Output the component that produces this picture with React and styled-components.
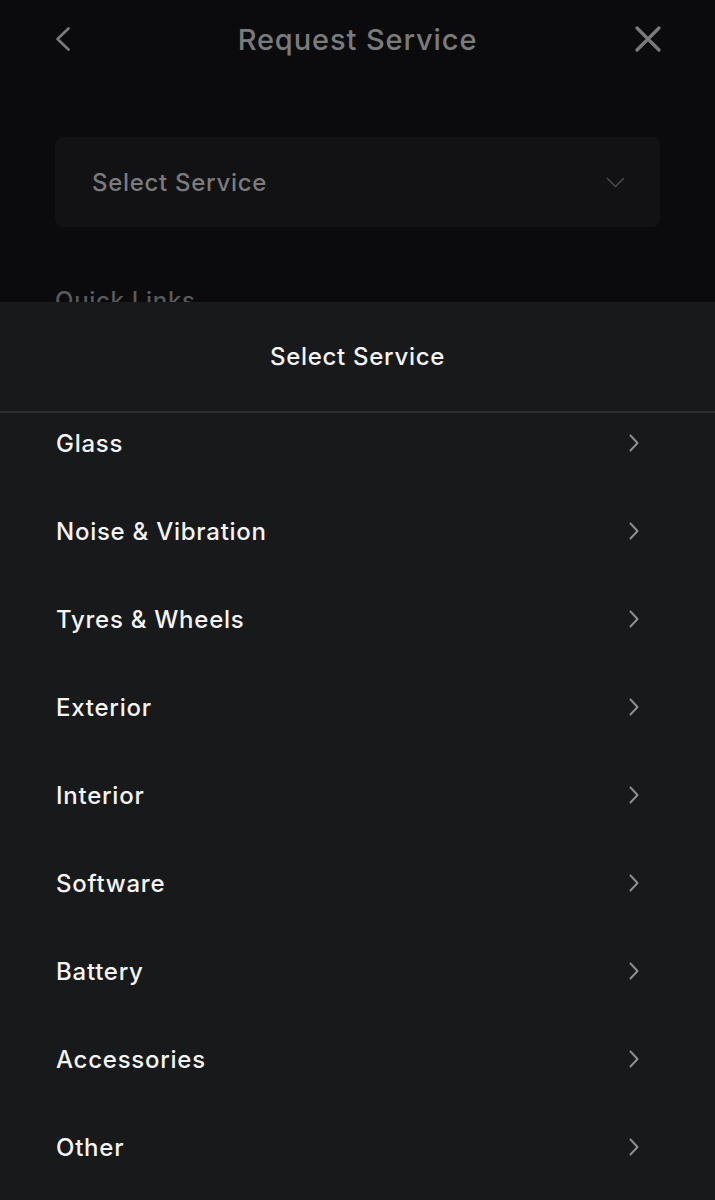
import React from "react";
import styled, { createGlobalStyle } from "styled-components";

const Global = createGlobalStyle`
  html, body {
    margin: 0;
    padding: 0;
    background: #0b0b0d;
  }
  * {
    box-sizing: border-box;
  }
`;

const Screen = styled.div`
  position: relative;
  width: 715px;
  height: 1200px;
  overflow: hidden;
  background: #0b0b0d;
  font-family: Inter, "Liberation Sans", sans-serif;
`;

const Header = styled.div`
  display: flex;
  align-items: center;
  justify-content: space-between;
  height: 78px;
  padding: 0 52px 0 48px;
`;

const IconButton = styled.div`
  width: 30px;
  height: 30px;
  display: flex;
  align-items: center;
  justify-content: center;
`;

const Title = styled.div`
  font-size: 29px;
  font-weight: 500;
  color: #7b7b7d;
  letter-spacing: 0.9px;
  margin-left: 4px;
`;

const Body = styled.div`
  padding: 59px 55px 0 55px;
`;

const SelectBox = styled.div`
  height: 90px;
  border-radius: 8px;
  background: #121214;
  display: flex;
  align-items: center;
  justify-content: space-between;
  padding: 0 35px 0 37px;
`;

const SelectLabel = styled.div`
  font-size: 24px;
  font-weight: 500;
  color: #7b7b7d;
  letter-spacing: 0.7px;
`;

const SectionTitle = styled.div`
  margin-top: 59px;
  font-size: 24px;
  font-weight: 500;
  color: #5a5a5d;
  letter-spacing: 0.7px;
`;

const Sheet = styled.div`
  position: absolute;
  left: 0;
  right: 0;
  top: 302px;
  bottom: 0;
  background: #18191b;
`;

const SheetHeader = styled.div`
  height: 111px;
  display: flex;
  align-items: center;
  justify-content: center;
  border-bottom: 2px solid #2e2f31;
  font-size: 24px;
  font-weight: 500;
  color: #f4f4f5;
  letter-spacing: 0.7px;
`;

const List = styled.div`
  display: flex;
  flex-direction: column;
  margin-top: -14px;
`;

const Item = styled.div`
  height: 88px;
  display: flex;
  align-items: center;
  justify-content: space-between;
  padding: 0 76px 0 56px;
`;

const ItemLabel = styled.div`
  font-size: 24px;
  font-weight: 500;
  color: #f4f4f5;
  letter-spacing: 0.75px;
`;

const Chevron = ({ dir = "right", color = "#8e8e90", w = 10, h = 18, stroke = 2 }) => {
  const paths = {
    right: `M1.5 1.5 L${w - 1.5} ${h / 2} L1.5 ${h - 1.5}`,
    left: `M${w - 1.5} 1.5 L1.5 ${h / 2} L${w - 1.5} ${h - 1.5}`,
    down: `M1.5 1.5 L${w / 2} ${h - 1.5} L${w - 1.5} 1.5`,
  };
  return (
    <svg width={w} height={h} viewBox={`0 0 ${w} ${h}`} fill="none">
      <path
        d={paths[dir]}
        stroke={color}
        strokeWidth={stroke}
        strokeLinecap="round"
        strokeLinejoin="round"
      />
    </svg>
  );
};

const Close = () => (
  <svg width="26" height="26" viewBox="0 0 26 26" fill="none">
    <path
      d="M2 2 L24 24 M24 2 L2 24"
      stroke="#7b7b7d"
      strokeWidth="3.2"
      strokeLinecap="round"
    />
  </svg>
);

const services = [
  "Glass",
  "Noise & Vibration",
  "Tyres & Wheels",
  "Exterior",
  "Interior",
  "Software",
  "Battery",
  "Accessories",
  "Other",
];

export default function App() {
  return (
    <Screen>
      <Global />
      <Header>
        <IconButton>
          <Chevron dir="left" color="#7b7b7d" w={14} h={24} stroke={2.6} />
        </IconButton>
        <Title>Request Service</Title>
        <IconButton>
          <Close />
        </IconButton>
      </Header>
      <Body>
        <SelectBox>
          <SelectLabel>Select Service</SelectLabel>
          <Chevron dir="down" color="#4a4a4d" w={19} h={11} stroke={1.6} />
        </SelectBox>
        <SectionTitle>Quick Links</SectionTitle>
      </Body>
      <Sheet>
        <SheetHeader>Select Service</SheetHeader>
        <List>
          {services.map((s) => (
            <Item key={s}>
              <ItemLabel>{s}</ItemLabel>
              <Chevron />
            </Item>
          ))}
        </List>
      </Sheet>
    </Screen>
  );
}
